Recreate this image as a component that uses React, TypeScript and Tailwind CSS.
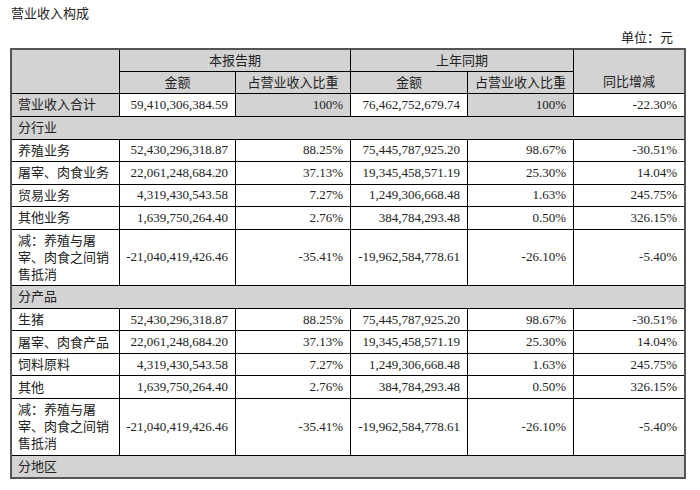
import React from "react";

type Row =
  | { kind: "section"; label: string }
  | { kind: "data"; label: string[]; v: [string, string, string, string, string] };

const rows: Row[] = [
  { kind: "section", label: "分行业" },
  { kind: "data", label: ["养殖业务"], v: ["52,430,296,318.87", "88.25%", "75,445,787,925.20", "98.67%", "-30.51%"] },
  { kind: "data", label: ["屠宰、肉食业务"], v: ["22,061,248,684.20", "37.13%", "19,345,458,571.19", "25.30%", "14.04%"] },
  { kind: "data", label: ["贸易业务"], v: ["4,319,430,543.58", "7.27%", "1,249,306,668.48", "1.63%", "245.75%"] },
  { kind: "data", label: ["其他业务"], v: ["1,639,750,264.40", "2.76%", "384,784,293.48", "0.50%", "326.15%"] },
  { kind: "data", label: ["减：养殖与屠", "宰、肉食之间销", "售抵消"], v: ["-21,040,419,426.46", "-35.41%", "-19,962,584,778.61", "-26.10%", "-5.40%"] },
  { kind: "section", label: "分产品" },
  { kind: "data", label: ["生猪"], v: ["52,430,296,318.87", "88.25%", "75,445,787,925.20", "98.67%", "-30.51%"] },
  { kind: "data", label: ["屠宰、肉食产品"], v: ["22,061,248,684.20", "37.13%", "19,345,458,571.19", "25.30%", "14.04%"] },
  { kind: "data", label: ["饲料原料"], v: ["4,319,430,543.58", "7.27%", "1,249,306,668.48", "1.63%", "245.75%"] },
  { kind: "data", label: ["其他"], v: ["1,639,750,264.40", "2.76%", "384,784,293.48", "0.50%", "326.15%"] },
  { kind: "data", label: ["减：养殖与屠", "宰、肉食之间销", "售抵消"], v: ["-21,040,419,426.46", "-35.41%", "-19,962,584,778.61", "-26.10%", "-5.40%"] },
  { kind: "section", label: "分地区" },
];

export default function App() {
  return (
    <div className="w-[700px] h-[490px] bg-white text-[#222] text-[13px] leading-[20px] font-['Liberation_Serif','Noto_Sans_CJK_SC',serif] overflow-hidden">
      <div className="pt-[4px] pl-[11px] h-[24px]">营业收入构成</div>
      <div className="mt-[4px] h-[20px] w-[686px] flex justify-end pr-[13px]">单位：元</div>
      <div className="ml-[10px] w-[676px] border-2 border-[#555] bg-black grid gap-px grid-cols-[107px_115px_114px_116px_105px_110px] grid-rows-[21px_21px_22px_21.5px_21.5px_21.5px_21.5px_21.5px_55.9px_21.5px_21.5px_21.5px_21.5px_21.5px_55.9px_21.5px]">
        <div className="row-span-2 bg-[#d3d3d3]" />
        <div className="col-span-2 bg-[#d3d3d3] flex items-center justify-center">本报告期</div>
        <div className="col-span-2 bg-[#d3d3d3] flex items-center justify-center">上年同期</div>
        <div className="row-span-2 bg-[#d3d3d3] flex items-end justify-center pb-[1px]">同比增减</div>
        <div className="bg-[#d3d3d3] flex items-center justify-center">金额</div>
        <div className="bg-[#d3d3d3] flex items-center justify-center">占营业收入比重</div>
        <div className="bg-[#d3d3d3] flex items-center justify-center">金额</div>
        <div className="bg-[#d3d3d3] flex items-center justify-center">占营业收入比重</div>

        <div className="bg-[#d3d3d3] flex items-center pl-[6px]">营业收入合计</div>
        <div className="bg-white flex items-center justify-end pr-[7px]">59,410,306,384.59</div>
        <div className="bg-[#d3d3d3] flex items-center justify-end pr-[7px]">100%</div>
        <div className="bg-white flex items-center justify-end pr-[7px]">76,462,752,679.74</div>
        <div className="bg-[#d3d3d3] flex items-center justify-end pr-[7px]">100%</div>
        <div className="bg-white flex items-center justify-end pr-[7px]">-22.30%</div>

        {rows.map((r, i) =>
          r.kind === "section" ? (
            <div key={i} className="col-span-6 bg-[#d3d3d3] flex items-center pl-[6px]">
              {r.label}
            </div>
          ) : (
            <React.Fragment key={i}>
              <div className="bg-white flex flex-col justify-center pl-[6px] leading-[17px]">
                {r.label.map((l, j) => (
                  <div key={j} className="whitespace-nowrap">{l}</div>
                ))}
              </div>
              {r.v.map((v, j) => (
                <div key={j} className="bg-white flex items-center justify-end pr-[7px]">
                  {v}
                </div>
              ))}
            </React.Fragment>
          )
        )}
      </div>
    </div>
  );
}
